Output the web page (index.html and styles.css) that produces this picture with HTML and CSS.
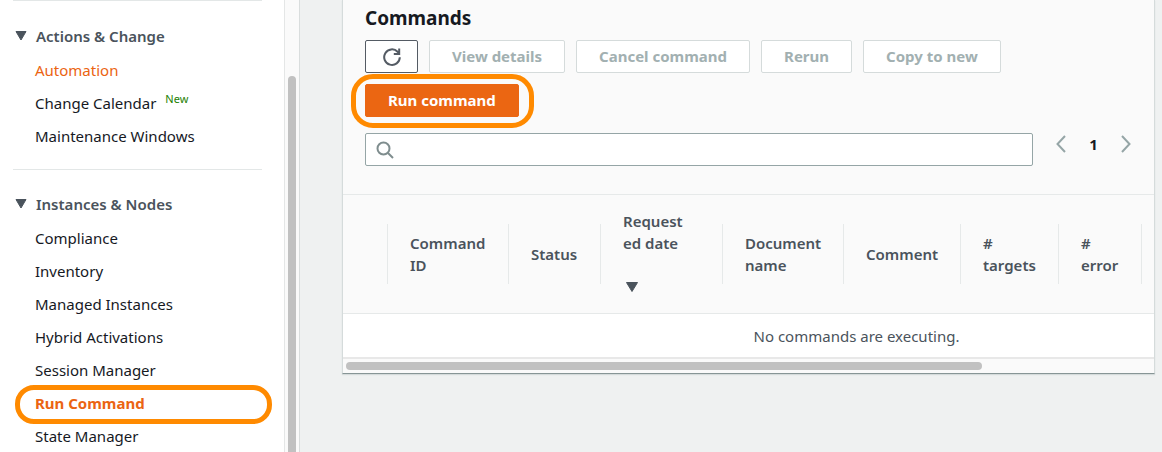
FILE: index.html
```html
<!DOCTYPE html>
<html lang="en">
<head>
<meta charset="utf-8">
<title>Run Command</title>
<link rel="stylesheet" href="styles.css">
</head>
<body>
<div class="app">
  <div class="sidebar">
    <nav class="nav" aria-label="Systems Manager">
      <section class="nav-section">
        <h2 class="nav-heading"><svg class="caret" viewBox="0 0 12 10" aria-hidden="true"><path d="M1 .5h10L6 9z"/></svg>Actions &amp; Change</h2>
        <ul class="nav-list">
          <li><a class="nav-link accent" href="#">Automation</a></li>
          <li><a class="nav-link" href="#">Change Calendar</a><span class="tag-new">New</span></li>
          <li><a class="nav-link" href="#">Maintenance Windows</a></li>
        </ul>
      </section>
      <section class="nav-section">
        <h2 class="nav-heading"><svg class="caret" viewBox="0 0 12 10" aria-hidden="true"><path d="M1 .5h10L6 9z"/></svg>Instances &amp; Nodes</h2>
        <ul class="nav-list">
          <li><a class="nav-link" href="#">Compliance</a></li>
          <li><a class="nav-link" href="#">Inventory</a></li>
          <li><a class="nav-link" href="#">Managed Instances</a></li>
          <li><a class="nav-link" href="#">Hybrid Activations</a></li>
          <li><a class="nav-link" href="#">Session Manager</a></li>
          <li class="marked"><a class="nav-link current" href="#" aria-current="page">Run Command</a></li>
          <li><a class="nav-link" href="#">State Manager</a></li>
        </ul>
      </section>
    </nav>
    <div class="v-track" aria-hidden="true"><div class="v-thumb"></div></div>
  </div>
  <main class="main">
    <div class="panel">
      <div class="panel-head">
        <h1 class="title">Commands</h1>
        <div class="actions">
          <button class="btn btn-icon" type="button" aria-label="Refresh">
            <svg class="refresh" viewBox="0 0 18 18" aria-hidden="true"><path d="M16.800 9.200A7.800 7.800 0 1 1 14.600 3.700L16.200 5.300M16.200 .6V6H10.800"/></svg>
          </button>
          <button class="btn" type="button" disabled>View details</button>
          <button class="btn" type="button" disabled>Cancel command</button>
          <button class="btn" type="button" disabled>Rerun</button>
          <button class="btn" type="button" disabled>Copy to new</button>
        </div>
        <div class="actions">
          <button class="btn btn-primary" type="button">Run command</button>
        </div>
        <div class="filter">
          <label class="search">
            <svg class="search-icon" viewBox="0 0 18 18" aria-hidden="true"><circle cx="7.500" cy="7.500" r="6"/><path d="M12 12l5 5"/></svg>
            <input class="search-input" type="text" aria-label="Search commands">
          </label>
          <div class="pager">
            <button class="page-btn" type="button" aria-label="Previous page"><svg class="chevron" viewBox="0 0 10 18" aria-hidden="true"><path d="M9 1L1.500 9 9 17"/></svg></button>
            <span class="page-num">1</span>
            <button class="page-btn" type="button" aria-label="Next page"><svg class="chevron" viewBox="0 0 10 18" aria-hidden="true"><path d="M1 1l7.500 8L1 17"/></svg></button>
          </div>
        </div>
      </div>
      <div class="table-wrap">
        <table class="table">
          <colgroup><col class="c-select"><col class="c-wide"><col class="c-status"><col class="c-date"><col class="c-wide"><col class="c-comment"><col class="c-targets"><col class="c-error"><col></colgroup>
          <thead>
            <tr>
              <td></td>
              <th scope="col">Command ID</th>
              <th scope="col">Status</th>
              <th scope="col" class="sorted">Request<wbr>ed date<svg class="caret sort" viewBox="0 0 12 10" aria-hidden="true"><path d="M.5 .5h11L6 9.500z"/></svg></th>
              <th scope="col">Document name</th>
              <th scope="col">Comment</th>
              <th scope="col"># targets</th>
              <th scope="col"># error</th>
              <td></td>
            </tr>
          </thead>
          <tbody>
            <tr><td class="empty" colspan="9">No commands are executing.</td></tr>
          </tbody>
        </table>
      </div>
      <div class="h-track" aria-hidden="true"><div class="h-thumb"></div></div>
    </div>
  </main>
</div>
</body>
</html>
```
FILE: styles.css
```css
* { box-sizing: border-box; }
body {
  margin: 0;
  background: #eff1f1;
  color: #16191f;
  font: 15px/22px "Noto Sans", sans-serif;
}
h1, h2, ul { margin: 0; padding: 0; }
.app { display: flex; height: 100vh; overflow: hidden; }

/* Side navigation */
.sidebar { display: flex; flex: 0 0 300px; background: #fff; }
.nav { flex: 1; padding: 0 22px 0 13px; }
.nav-section { border-top: 1px solid #e3e7e7; padding: 24px 0 22px; }
.nav-section + .nav-section { padding-top: 23px; }
.nav-heading {
  display: flex;
  align-items: center;
  gap: 9px;
  padding-left: 2px;
  color: #4a535c;
  font-size: 15px;
  font-weight: 600;
  line-height: 22px;
}
.caret { width: 12px; height: 10px; fill: #4a535c; stroke: #4a535c; stroke-linejoin: round; }
.nav-list {
  display: flex;
  flex-direction: column;
  gap: 11px;
  margin-top: 12px;
  padding-left: 22px;
  list-style: none;
}
.nav-link { color: #16191f; text-decoration: none; }
.accent { color: #eb6412; }
.current { color: #eb6412; font-weight: 700; }
.tag-new { margin-left: 9px; color: #1d8102; font-size: 11px; line-height: 11px; vertical-align: 6px; }
.nav-list li { height: 22px; }
.marked { position: relative; }
.marked::after {
  content: "";
  position: absolute;
  inset: -7px -10px -10px -20px;
  border: 5px solid #ff8a00;
  border-radius: 19px;
  pointer-events: none;
}
.v-track {
  flex: 0 0 16px;
  padding: 76px 3px 0;
  background: #fafafa;
  border-left: 1px solid #e4e6e6;
  border-right: 1px solid #d9dddd;
}
.v-thumb { width: 8px; height: 100%; background: #c1c1c1; border-radius: 4px 4px 0 0; }

/* Commands panel */
.main { flex: 1; min-width: 0; padding: 0 7px 0 42px; }
.panel {
  background: #fafafa;
  border: 1px solid #d5dbdb;
  border-top: 0;
  border-bottom: 1px solid #879596;
  box-shadow: 0 1px 1px #d5dbdb;
}
.panel-head {
  display: flex;
  flex-direction: column;
  gap: 11px;
  padding: 4px 22px 28px;
}
.title { margin-bottom: -3px; font-size: 19px; font-weight: 700; line-height: 28px; }
.actions { display: flex; gap: 11px; }
.btn {
  height: 33px;
  padding: 0 22px 2px;
  border: 1px solid #d5dbdb;
  border-radius: 2px;
  background: #fff;
  color: #a2b0b1;
  font: 700 15px/22px "Noto Sans", sans-serif;
}
.btn-icon { display: flex; align-items: center; justify-content: center; width: 53px; padding: 0; border-color: #545b64; }
.refresh { width: 18px; height: 18px; fill: none; stroke: #545b64; stroke-width: 2; }
.btn-primary { position: relative; border-color: #eb6612; background: #eb6612; color: #fff; }
.btn-primary::after {
  content: "";
  position: absolute;
  inset: -11px -16px -12px -15px;
  border: 5px solid #ff8a00;
  border-radius: 22px;
  pointer-events: none;
}
.filter { display: flex; gap: 22px; margin-top: 5px; }
.search {
  display: flex;
  flex: 1;
  align-items: center;
  gap: 11px;
  height: 33px;
  padding: 0 10px;
  border: 1px solid #95a5a6;
  border-radius: 2px;
  background: #fff;
}
.search-icon { width: 18px; height: 18px; fill: none; stroke: #7f8d8e; stroke-width: 2; }
.search-input { flex: 1; min-width: 0; border: 0; outline: 0; background: none; font: inherit; }
.pager { display: flex; align-items: center; justify-content: space-between; width: 77px; height: 22px; }
.page-btn { display: flex; padding: 0; border: 0; background: none; }
.chevron { width: 12px; height: 18px; fill: none; stroke: #95a5a6; stroke-width: 2; }
.page-num { font-weight: 700; }

.table-wrap { overflow: hidden; }
.table { width: 1027px; table-layout: fixed; border-collapse: separate; border-spacing: 0; color: #4a535c; }
.c-select { width: 45px; }
.c-wide { width: 121px; }
.c-date { width: 122px; }
.c-status { width: 92px; }
.c-comment { width: 117px; }
.c-targets { width: 98px; }
.c-error { width: 83px; }
.table thead td, .table th {
  height: 120px;
  padding: 15px 20px 15px 22px;
  border-top: 1px solid #e6e9e9;
  border-bottom: 1px solid #e6e9e9;
  background: linear-gradient(#e6e9e9, #e6e9e9) right center / 1px 60px no-repeat;
  font-weight: 600;
  text-align: left;
  vertical-align: middle;
}
.table thead td:last-child { background: none; }
.table th.sorted { padding-right: 32px; }
.sort { display: block; margin: 28px 0 6px 3px; }
.table .empty { padding: 11px 0 10px; background: #fff; text-align: center; }
.h-track { height: 16px; padding: 3px; border-top: 2px solid #e8e8e8; }
.h-thumb { width: 79%; height: 8px; background: #c1c1c1; border-radius: 4px; }
```
